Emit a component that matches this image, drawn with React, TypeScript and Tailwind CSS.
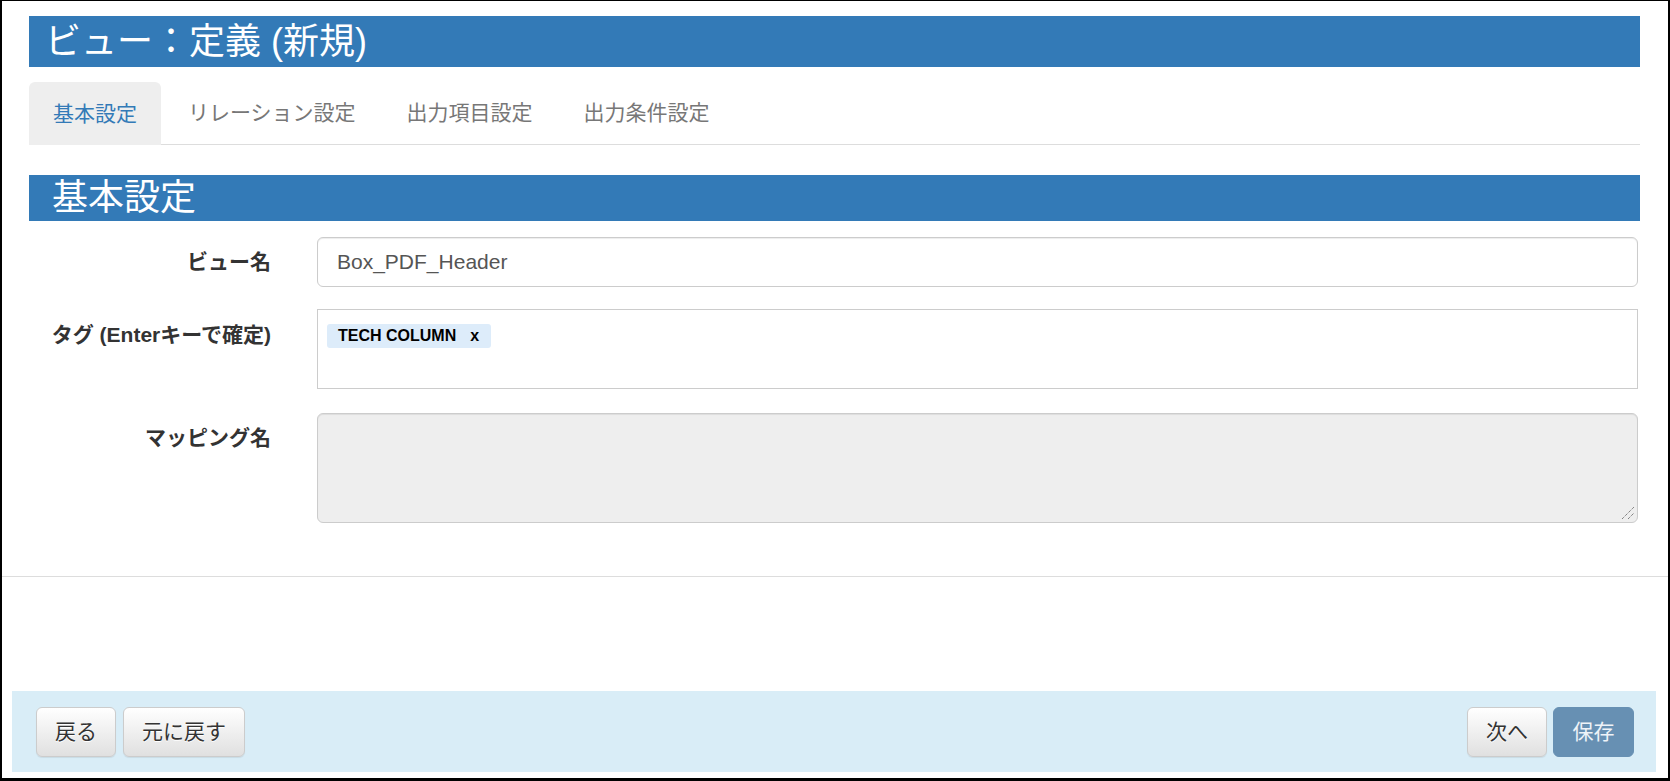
import React from "react";

const tabs = ["基本設定", "リレーション設定", "出力項目設定", "出力条件設定"];

function Btn({ children, primary }: { children: React.ReactNode; primary?: boolean }) {
  if (primary) {
    return (
      <button className="h-[50px] w-[81px] rounded-[6px] border border-[#6790b3] bg-[#6790b3] text-[21px] leading-[30px] text-[#eef3f8]">
        {children}
      </button>
    );
  }
  return (
    <button className="h-[50px] px-[18px] rounded-[6px] border border-[#ccc] bg-gradient-to-b from-white to-[#e0e0e0] text-[21px] leading-[30px] text-[#333] shadow-[0_1px_1px_rgba(0,0,0,0.075)] [text-shadow:0_1px_0_#fff]">
      {children}
    </button>
  );
}

export default function App() {
  return (
    <div className="h-[781px] w-full border-l-2 border-r-2 border-b-[3px] border-t border-black bg-white flex flex-col font-['Liberation_Sans','Noto_Sans_CJK_JP',sans-serif] text-[#333]">
      <div className="pl-[27px] pr-[28px] pt-[15px]">
        <div className="h-[51px] bg-[#337ab7] flex items-center pl-[16px] text-white text-[36px] leading-[40px]">
          ビュー：定義 (新規)
        </div>

        <div className="mt-[15px] flex items-start h-[63px] border-b border-[#ddd]">
          {tabs.map((t, i) => (
            <div
              key={t}
              className={
                i === 0
                  ? "h-[63px] px-6 mr-[3px] flex items-center rounded-t-[6px] bg-[#eee] text-[#337ab7] text-[21px] leading-[30px]"
                  : "h-[62px] px-6 mr-[3px] flex items-center text-[#777] text-[21px] leading-[30px]"
              }
            >
              {t}
            </div>
          ))}
        </div>

        <div className="mt-[30px] h-[46px] bg-[#337ab7] flex items-center pl-[23px] text-white text-[36px] leading-[40px]">
          基本設定
        </div>

        <div className="mt-[16px] flex flex-col gap-[22px]">
          <div className="flex">
            <div className="w-[242px] shrink-0 text-right font-bold text-[21px] leading-[30px] pt-[10px]">ビュー名</div>
            <div className="flex-1 ml-[46px] mr-[2px] h-[50px] rounded-[6px] border border-[#ccc] shadow-[inset_0_1px_1px_rgba(0,0,0,0.075)] flex items-center pl-[19px] text-[21px] text-[#555]">
              Box_PDF_Header
            </div>
          </div>

          <div className="flex">
            <div className="w-[242px] shrink-0 text-right font-bold text-[21px] leading-[30px] pt-[11px]">タグ (Enterキーで確定)</div>
            <div className="flex-1 ml-[46px] mr-[2px] h-[80px] border border-[#ccc] pl-[9px] pt-[14px]">
              <span className="inline-flex items-center h-[24px] rounded-[3px] bg-[#ddecfa] pl-[11px] pr-[12px] text-[16px] font-bold text-black">
                <span>TECH COLUMN</span>
                <span className="ml-[14px]">x</span>
              </span>
            </div>
          </div>

          <div className="flex mt-[2px]">
            <div className="w-[242px] shrink-0 text-right font-bold text-[21px] leading-[30px] pt-[10px]">マッピング名</div>
            <div className="relative flex-1 ml-[46px] mr-[2px] h-[110px] rounded-[6px] border border-[#ccc] bg-[#eee] shadow-[inset_0_1px_1px_rgba(0,0,0,0.075)]">
              <svg className="absolute right-[2px] bottom-[2px]" width="14" height="14" viewBox="0 0 14 14">
                <line x1="1" y1="13" x2="13" y2="1" stroke="#555" strokeWidth="1" strokeDasharray="1 1" />
                <line x1="7" y1="13" x2="13" y2="7" stroke="#555" strokeWidth="1" strokeDasharray="1 1" />
              </svg>
            </div>
          </div>
        </div>
      </div>

      <div className="mt-[53px] border-t border-[#ddd]" />

      <div className="mt-auto mb-[6px] ml-[10px] mr-[12px] h-[81px] bg-[#d9edf7] flex items-start justify-between pt-[16px] pl-[24px] pr-[22px]">
        <div className="flex gap-[7px]">
          <Btn>戻る</Btn>
          <Btn>元に戻す</Btn>
        </div>
        <div className="flex gap-[6px]">
          <Btn>次へ</Btn>
          <Btn primary>保存</Btn>
        </div>
      </div>
    </div>
  );
}
